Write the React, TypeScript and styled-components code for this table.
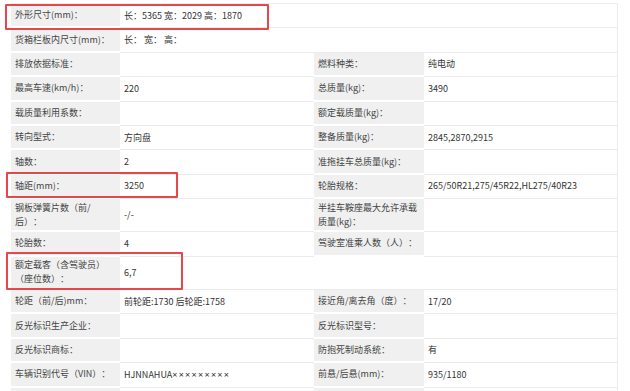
import React from "react";
import styled, { createGlobalStyle } from "styled-components";

const Global = createGlobalStyle`
  html, body { margin: 0; padding: 0; background: #fff; }
  body { font-family: "Noto Sans CJK SC", "Noto Sans", sans-serif; }
  #root { width: 630px; height: 391px; overflow: hidden; }
`;

const Page = styled.div`
  position: relative;
  width: 630px;
  height: 391px;
  overflow: hidden;
  padding: 3px 0 0 11px;
  box-sizing: border-box;
`;

const Table = styled.div`
  display: flex;
  flex-direction: column;
  width: 607px;
  border-top: 1px solid #ececec;
  box-sizing: border-box;
`;

const Row = styled.div<{ $h: number }>`
  display: grid;
  grid-template-columns: 109px 194px 110px 193px;
  height: ${(p) => p.$h}px;
  border-right: 1px solid #ececec;
`;

const Label = styled.div`
  background: #f0f0f0;
  border-bottom: 2px solid #fff;
  box-sizing: border-box;
  display: flex;
  align-items: center;
  padding: 0 4px;
  font-size: 9px;
  line-height: 14px;
  color: #444;
  text-spacing-trim: space-all;
`;

const Value = styled.div<{ $span?: number }>`
  grid-column: span ${(p) => p.$span ?? 1};
  border-bottom: 1px solid #ebebeb;
  box-sizing: border-box;
  display: flex;
  align-items: center;
  padding: 0 3px 0 4px;
  font-size: 9px;
  line-height: 14px;
  color: #333;
  white-space: pre;
`;

const Cross = styled.span`
  font-family: "Noto Sans", sans-serif;
  letter-spacing: 1.3px;
`;

const Mark = styled.div<{ $x: number; $y: number; $w: number; $h: number }>`
  position: absolute;
  left: ${(p) => p.$x}px;
  top: ${(p) => p.$y}px;
  width: ${(p) => p.$w}px;
  height: ${(p) => p.$h}px;
  border: 2px solid #e8464b;
  border-radius: 1px;
  box-sizing: border-box;
  pointer-events: none;
`;

type R = { h: number; cells: React.ReactNode[]; span?: boolean };

const H = 24.4;

const rows: R[] = [
  { h: H, cells: ["外形尺寸(mm)：", "长：5365 宽：2029 高：1870"], span: true },
  { h: H, cells: ["货箱栏板内尺寸(mm)：", "长： 宽： 高："], span: true },
  { h: H, cells: ["排放依据标准：", "", "燃料种类：", "纯电动"] },
  { h: H, cells: ["最高车速(km/h)：", "220", "总质量(kg)：", "3490"] },
  { h: H, cells: ["载质量利用系数：", "", "额定载质量(kg)：", ""] },
  { h: H, cells: ["转向型式：", "方向盘", "整备质量(kg)：", "2845,2870,2915"] },
  { h: H, cells: ["轴数：", "2", "准拖挂车总质量(kg)：", ""] },
  { h: H, cells: ["轴距(mm)：", "3250", "轮胎规格：", "265/50R21,275/45R22,HL275/40R23"] },
  { h: 33, cells: ["钢板弹簧片数（前/后）：", "-/-", "半挂车鞍座最大允许承载质量(kg)：", ""] },
  { h: H, cells: ["轮胎数：", "4", "驾驶室准乘人数（人）：", ""] },
  { h: 33.5, cells: ["额定载客（含驾驶员）（座位数）：", "6,7"], span: true },
  { h: H, cells: ["轮距（前/后)mm：", "前轮距:1730 后轮距:1758", "接近角/离去角（度）：", "17/20"] },
  { h: H, cells: ["反光标识生产企业：", "", "反光标识型号：", ""] },
  { h: H, cells: ["反光标识商标：", "", "防抱死制动系统：", "有"] },
  {
    h: H,
    cells: [
      "车辆识别代号（VIN）：",
      <>
        HJNNAHUA<Cross>×××××××××</Cross>
      </>,
      "前悬/后悬(mm)：",
      "935/1180",
    ],
  },
  { h: H, cells: ["", "", "", ""] },
];

export default function App() {
  return (
    <>
      <Global />
      <Page>
        <Table>
          {rows.map((r, i) => (
            <Row key={i} $h={r.h}>
              <Label>{r.cells[0]}</Label>
              {r.span ? (
                <Value $span={3}>{r.cells[1]}</Value>
              ) : (
                <>
                  <Value>{r.cells[1]}</Value>
                  <Label>{r.cells[2]}</Label>
                  <Value>{r.cells[3]}</Value>
                </>
              )}
            </Row>
          ))}
        </Table>
        <Mark $x={5} $y={4} $w={264} $h={26} />
        <Mark $x={6} $y={172} $w={172} $h={26} />
        <Mark $x={6} $y={252} $w={177} $h={38} />
      </Page>
    </>
  );
}
